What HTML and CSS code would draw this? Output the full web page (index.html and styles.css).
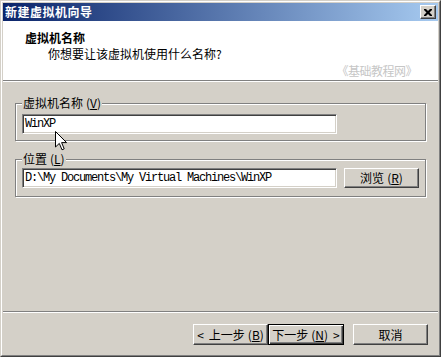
FILE: index.html
```html
<!DOCTYPE html>
<html lang="zh-CN">
<head>
<meta charset="utf-8">
<title>新建虚拟机向导</title>
<link rel="stylesheet" href="styles.css">
</head>
<body>
<div class="window">
  <div class="frame">
    <div class="titlebar">
      <span class="title-text">新建虚拟机向导</span>
      <button class="close-btn" aria-label="关闭">
        <svg width="8" height="7" viewBox="0 0 8 7"><path d="M0 0h2l2 2 2-2h2v1L5.5 3.5 8 6v1H6L4 5 2 7H0V6l2.5-2.5L0 1z" fill="#000"/></svg>
      </button>
    </div>
    <div class="header">
      <div class="h-title">虚拟机名称</div>
      <div class="h-sub">你想要让该虚拟机使用什么名称?</div>
      <div class="watermark">《基础教程网》</div>
    </div>
    <div class="sep"></div>
    <div class="body">
      <fieldset class="group">
        <legend class="legend">虚拟机名称<span class="mn">(<u>V</u>)</span></legend>
        <div class="field">WinXP</div>
      </fieldset>
      <fieldset class="group group-loc">
        <legend class="legend">位置<span class="mn">(<u>L</u>)</span></legend>
        <div class="row">
          <div class="field">D:\My Documents\My Virtual Machines\WinXP</div>
          <button class="btn">浏览<span class="mn">(<u>R</u>)</span></button>
        </div>
      </fieldset>
    </div>
    <div class="sep"></div>
    <div class="buttons">
      <button class="btn btn-wide"><span class="arrow-l">&lt;</span>上一步<span class="mn">(<u>B</u>)</span></button>
      <button class="btn btn-wide btn-default">下一步<span class="mn">(<u>N</u>)</span><span class="arrow-r">&gt;</span></button>
      <button class="btn btn-wide btn-cancel">取消</button>
    </div>
  </div>
  <svg class="cursor" width="13" height="20" viewBox="0 0 13 20"><path d="M0.5 0.5V16L4.3 12.4L7 18.8L9.2 17.8L6.6 11.6H11.6Z" fill="#fff" stroke="#000" stroke-width="1" stroke-linejoin="miter"/></svg>
</div>
</body>
</html>
```
FILE: styles.css
```css
* { box-sizing: border-box; }
html, body { margin: 0; padding: 0; background: #D4D0C8; }
body {
  font-family: "Noto Sans CJK SC", "Liberation Sans", sans-serif;
  font-size: 12px;
  line-height: 14px;
  color: #000;
}
.window {
  position: relative;
  width: 441px;
  height: 357px;
  border-style: solid;
  border-width: 1px;
  border-color: #D4D0C8 #404040 #404040 #D4D0C8;
}
.frame {
  height: 100%;
  display: flex;
  flex-direction: column;
  padding: 1px;
  background: #D4D0C8;
  border-style: solid;
  border-width: 1px;
  border-color: #fff #808080 #808080 #fff;
}
.titlebar {
  height: 18px;
  flex: none;
  display: flex;
  align-items: center;
  justify-content: space-between;
  padding: 0 2px 0 2px;
  background: linear-gradient(to right, #0A246A, #A6CAF0);
}
.title-text {
  color: #fff;
  font-weight: bold;
  font-size: 12px;
  line-height: 14px;
  letter-spacing: 0.5px;
}
.close-btn {
  width: 16px;
  height: 14px;
  padding: 0;
  margin: 0;
  display: flex;
  align-items: center;
  justify-content: center;
  background: #D4D0C8;
  border-style: solid;
  border-width: 1px;
  border-color: #fff #404040 #404040 #fff;
  box-shadow: inset -1px -1px 0 #808080;
}
.header {
  height: 59px;
  flex: none;
  background: #fff;
  display: flex;
  flex-direction: column;
  padding: 10px 21px 0 22px;
}
.h-title { font-weight: bold; }
.h-sub { margin: 2px 0 0 23px; }
.watermark {
  align-self: flex-end;
  margin-top: 3px;
  color: #C6C6C6;
  letter-spacing: -0.5px;
}
.sep {
  flex: none;
  height: 2px;
  border-top: 1px solid #808080;
  border-bottom: 1px solid #fff;
}
.body {
  flex: 1;
  padding: 13px 0 0 0;
}
.group {
  margin: 0 12px;
  padding: 3px 6px 6px 6px;
  border: 1px solid #808080;
  box-shadow: inset 1px 1px 0 #fff, 1px 1px 0 #fff;
}
.group-loc { margin-top: 10px; padding: 1px 6px 8px 6px; }
.legend {
  padding: 0 1px;
  margin-left: 0;
  line-height: 16px;
  background: #D4D0C8;
}
.mn { margin-left: 3px; }
.arrow-l { margin-right: 5px; }
.arrow-r { margin-left: 5px; }
.legend u, .btn u { text-decoration: underline; }
.field {
  width: 315px;
  height: 20px;
  background: #fff;
  border-style: solid;
  border-width: 1px;
  border-color: #808080 #fff #fff #808080;
  box-shadow: inset 1px 1px 0 #404040, inset -1px -1px 0 #D4D0C8;
  padding: 2px 0 0 2px;
  font-family: "Liberation Mono", monospace;
  font-size: 12px;
  letter-spacing: -1.2px;
  line-height: 14px;
  white-space: nowrap;
  overflow: hidden;
}
.row {
  display: flex;
  align-items: center;
  gap: 7px;
}
.btn {
  font: inherit;
  color: #000;
  width: 75px;
  height: 20px;
  padding: 0;
  margin: 0;
  background: #D4D0C8;
  border-style: solid;
  border-width: 1px;
  border-color: #fff #404040 #404040 #fff;
  box-shadow: inset -1px -1px 0 #808080;
  display: flex;
  align-items: center;
  justify-content: center;
}
.buttons {
  flex: none;
  height: 41px;
  display: flex;
  align-items: flex-start;
  padding: 11px 10px 0 0;
  justify-content: flex-end;
}
.btn-wide { height: 21px; }
.btn-default {
  width: 76px;
  border: 1px solid #000;
  box-shadow: inset 1px 1px 0 #fff, inset -1px -1px 0 #404040, inset -2px -2px 0 #808080;
}
.btn-cancel { margin-left: 9px; }
.cursor {
  position: absolute;
  left: 54px;
  top: 130px;
}
```
